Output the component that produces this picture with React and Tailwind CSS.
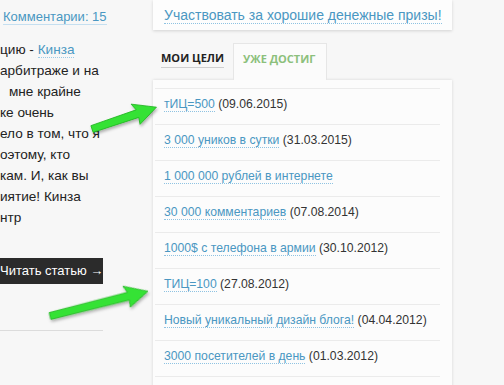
import React from 'react'

const goals = [
    { title: 'тИЦ=500', date: '(09.06.2015)' },
    { title: '3 000 уников в сутки', date: '(31.03.2015)' },
    { title: '1 000 000 рублей в интернете', date: '' },
    { title: '30 000 комментариев', date: '(07.08.2014)' },
    { title: '1000$ с телефона в армии', date: '(30.10.2012)' },
    { title: 'ТИЦ=100', date: '(27.08.2012)' },
    { title: 'Новый уникальный дизайн блога!', date: '(04.04.2012)' },
    { title: '3000 посетителей в день', date: '(01.03.2012)' },
]

const lines = [
    { text: 'цию - ', link: 'Кинза' },
    { text: 'арбитраже и на' },
    { text: 'мне крайне', indent: true },
    { text: 'ке очень' },
    { text: 'ело в том, что я' },
    { text: 'оэтому, кто' },
    { text: 'кам. И, как вы' },
    { text: 'иятие! Кинза' },
    { text: 'нтр' },
]

const Arrow = ({ x, y, angle, length }) => (
    <g transform={`translate(${x} ${y}) rotate(${angle})`}>
        <path
            d={`M0 -3.5 L${length - 20} -4 L${length - 23} -11 L${length} 0 L${length - 21} 11 L${length - 20} 4 L0 3.5 Z`}
            fill="#36e236"
            stroke="#22b522"
            strokeWidth="0.8"
            strokeLinejoin="round"
        />
    </g>
)

const App = () => {
    return (
        <div className="relative w-[504px] h-[385px] overflow-hidden bg-[#f7f7f7] font-['Liberation_Sans',Arial,sans-serif]">
            <div className="flex gap-[50px]">
                {/* Left column: article teaser */}
                <div className="w-[103px] shrink-0">
                    <div className="pl-[3px] pt-[4px] h-[22px] whitespace-nowrap">
                        <span className="text-[13px] leading-[16px] text-[#4a97c2] border-b border-[#c5dff0]">
                            Комментарии: 15
                        </span>
                    </div>
                    <div className="mt-[17px] text-[13.6px] leading-[21px] text-[#222] whitespace-nowrap">
                        {lines.map((l, i) => (
                            <div key={i} className={l.indent ? 'pl-[9px]' : ''}>
                                {l.text}
                                {l.link && (
                                    <span className="text-[#4a97c2] border-b border-dotted border-[#9ccbe6]">{l.link}</span>
                                )}
                            </div>
                        ))}
                    </div>
                    <div className="mt-[30px] h-[26px] bg-[#2b2b2b] flex items-center text-white text-[13px] whitespace-nowrap">
                        Читать статью →
                    </div>
                    <div className="mt-[46px] h-px bg-[#dcdcdc]" />
                </div>

                {/* Right column: goals widget */}
                <div className="w-[299px] shrink-0">
                    <div className="h-[30px] bg-[#fdfdfd] shadow-[0_1px_3px_rgba(0,0,0,0.15)] pl-[11px] pt-[3px]">
                        <span className="text-[14px] leading-[18px] text-[#4a97c2] border-b border-dotted border-[#8fc3e2]">
                            Участвовать за хорошие денежные призы!
                        </span>
                    </div>

                    <div className="mt-[13px] h-[37px] flex items-start font-['Open_Sans',sans-serif] font-bold text-[11px] uppercase">
                        <div className="pl-[8px] pt-[7px] w-[80px]">
                            <span className="text-[#222] leading-[16px] pb-[2px] border-b border-[#cfcfcf]">Мои цели</span>
                        </div>
                        <div className="w-[94px] h-[37px] bg-[#fbfbfb] border-x border-t border-[#e6e6e6] pt-[7px] pl-[9px] text-[#8cc07c] leading-[16px]">
                            Уже достиг
                        </div>
                    </div>

                    <div className="h-[310px] bg-[#fcfcfc] shadow-[0_0_3px_rgba(0,0,0,0.14)] pt-[8px] pl-[2px] pr-[12px]">
                        <div className="border-t border-[#ebebeb]">
                            {goals.map((g, i) => (
                                <div key={i} className="h-[36px] border-b border-[#ebebeb] pl-[9px] pt-[7px] text-[12.2px] leading-[16px] whitespace-nowrap">
                                    <span className="text-[#4a97c2] border-b border-dotted border-[#8fc3e2]">{g.title}</span>
                                    {g.date && <span className="text-[#333]"> {g.date}</span>}
                                </div>
                            ))}
                        </div>
                    </div>
                </div>
            </div>

            {/* Annotation arrows */}
            <svg className="absolute inset-0 pointer-events-none" width="504" height="385">
                <defs>
                    <filter id="sh" x="-20%" y="-50%" width="140%" height="200%">
                        <feDropShadow dx="1" dy="2" stdDeviation="1.5" floodColor="#000" floodOpacity="0.3" />
                    </filter>
                </defs>
                <g filter="url(#sh)">
                    <Arrow x={92} y={129} angle={-18.7} length={68} />
                    <Arrow x={50} y={316} angle={-14.2} length={101} />
                </g>
            </svg>
        </div>
    )
}

export default App
